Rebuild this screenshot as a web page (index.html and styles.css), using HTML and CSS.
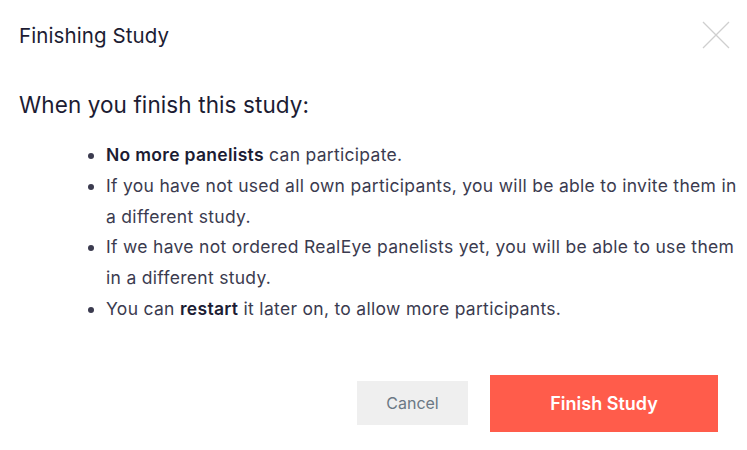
FILE: index.html
```html
<!DOCTYPE html>
<html lang="en">
<head>
    <meta charset="UTF-8">
    <meta name="viewport" content="width=device-width, initial-scale=1.0">
    <title>Finishing Study</title>
    <link rel="stylesheet" href="styles.css">
</head>
<body>
    <div class="modal">
        <div class="modal-header">
            <h3 class="modal-title">Finishing Study</h3>
            <button class="close-btn" aria-label="Close">
                <svg width="28" height="28" viewBox="0 0 28 28">
                    <path d="M1 1 L27 27 M27 1 L1 27" stroke="#cfcfcf" stroke-width="1.3" fill="none"/>
                </svg>
            </button>
        </div>
        <div class="modal-body">
            <h2 class="lead">When you finish this study:</h2>
            <ul class="notes">
                <li><b>No more panelists</b> can participate.</li>
                <li>If you have not used all own participants, you will be able to invite them in a different study.</li>
                <li>If we have not ordered RealEye panelists yet, you will be able to use them in a different study.</li>
                <li>You can <b>restart</b> it later on, to allow more participants.</li>
            </ul>
        </div>
        <div class="modal-footer">
            <button class="btn btn-cancel">Cancel</button>
            <button class="btn btn-finish">Finish Study</button>
        </div>
    </div>
</body>
</html>
```

FILE: styles.css
```css
body {
    margin: 0;
    font-family: Inter, Roboto, sans-serif;
    background: white;
    color: #1c1c33;
}
.modal {
    width: 747px;
    height: 450px;
    box-sizing: border-box;
    padding: 0 17px 0 19px;
}
.modal-header {
    display: flex;
    justify-content: space-between;
    align-items: center;
    height: 70px;
}
.modal-title {
    margin: 0;
    font-size: 20.5px;
    font-weight: 400;
    letter-spacing: 0.1px;
}
.close-btn {
    background: none;
    border: none;
    padding: 0;
    width: 28px;
    height: 28px;
    cursor: pointer;
}
.lead {
    margin: 21px 0 0 0;
    font-size: 22.5px;
    font-weight: 400;
    letter-spacing: 0.1px;
}
.notes {
    margin: 22px -13px 0 0;
    padding-left: 87px;
    font-size: 17.5px;
    letter-spacing: 0.3px;
    line-height: 30.8px;
    color: #3b3b4f;
}
.notes b {
    color: #1c1c33;
    font-weight: 600;
}
.modal-footer {
    display: flex;
    justify-content: flex-end;
    align-items: center;
    gap: 22px;
    margin-top: 50px;
    padding-right: 12px;
}
.btn {
    border: none;
    font-family: inherit;
    font-size: 16px;
    cursor: pointer;
}
.btn-cancel {
    width: 111px;
    height: 44px;
    background: #efefef;
    color: #6b7884;
}
.btn-finish {
    width: 228px;
    height: 57px;
    background: #ff5c4b;
    color: white;
    font-size: 18px;
    font-weight: 600;
}
```
